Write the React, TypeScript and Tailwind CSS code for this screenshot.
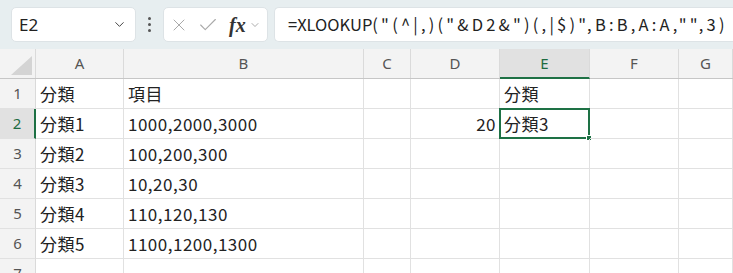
import { ChevronDown, X, Check } from "lucide-react";

const cols = [
  { key: "A", w: "w-[88px]" },
  { key: "B", w: "w-[240px]" },
  { key: "C", w: "w-[47px]" },
  { key: "D", w: "w-[89px]" },
  { key: "E", w: "w-[90px]" },
  { key: "F", w: "w-[89px]" },
  { key: "G", w: "flex-1" },
];

const data: Record<number, Record<string, string>> = {
  1: { A: "分類", B: "項目", E: "分類" },
  2: { A: "分類1", B: "1000,2000,3000", D: "20", E: "分類3" },
  3: { A: "分類2", B: "100,200,300" },
  4: { A: "分類3", B: "10,20,30" },
  5: { A: "分類4", B: "110,120,130" },
  6: { A: "分類5", B: "1100,1200,1300" },
  7: {},
};

const jp = "font-['Noto_Sans_CJK_JP','Noto_Sans',sans-serif]";

export default function App() {
  return (
    <div className="w-[733px] h-[273px] overflow-hidden bg-white">
      {/* formula bar */}
      <div className="h-[49px] bg-[#e7eef0] flex items-center pl-[11px] pr-0 gap-0">
        <div className="w-[125px] h-[35px] bg-white rounded-[5px] border border-[#dde3e6] flex items-center justify-between pl-[7px] pr-[8px]">
          <span className="text-[17px] text-[#222] font-['Noto_Sans',sans-serif]">E2</span>
          <ChevronDown size={15} strokeWidth={1.6} className="text-[#444]" />
        </div>
        <div className="w-[27px] flex flex-col items-center gap-[3px]">
          <span className="w-[3px] h-[3px] bg-[#555] rounded-full" />
          <span className="w-[3px] h-[3px] bg-[#555] rounded-full" />
          <span className="w-[3px] h-[3px] bg-[#555] rounded-full" />
        </div>
        <div className="w-[105px] h-[35px] bg-white rounded-[5px] border border-[#dde3e6] flex items-center pl-[5px]">
          <X size={20} strokeWidth={1.2} className="text-[#a9a9a9]" />
          <Check size={22} strokeWidth={1.2} className="text-[#a9a9a9] ml-[8px]" />
          <span className="ml-[10px] text-[20px] italic font-semibold text-[#333] font-['Liberation_Serif',serif] leading-none">fx</span>
          <ChevronDown size={12} strokeWidth={1.4} className="text-[#888] ml-[3px]" />
        </div>
        <div className="ml-[6px] flex-1 h-[35px] bg-white rounded-l-[5px] border border-r-0 border-[#dde3e6] flex items-center pl-[13px]">
          <span className={`text-[16.5px] text-[#222] whitespace-nowrap ${jp}`}>
            <span className="tracking-[0px]">=XLOOKUP</span>
            <span className="tracking-[3.2px]">("(^|,)("&D2&")(,|$)",B:B,A:A,"",3)</span>
          </span>
        </div>
      </div>

      {/* column headers */}
      <div className="flex h-[30px] bg-[#f3f3f3] border-b border-[#c6c6c6]">
        <div className="w-[36px] border-r border-[#dadada] relative">
          <div className="absolute right-[3px] bottom-[3px] w-0 h-0 border-l-[21px] border-l-transparent border-b-[19px] border-b-[#d4d4d4]" />
        </div>
        {cols.map((c) => (
          <div
            key={c.key}
            className={`${c.w} shrink-0 flex items-center justify-center text-[15px] font-['Noto_Sans',sans-serif] ${
              c.key === "E"
                ? "bg-[#e1e1e1] text-[#1e6b41] border-b-2 border-[#1e7145] -mb-px border-r border-r-[#dadada]"
                : "text-[#555] border-r border-[#dadada]"
            }`}
          >
            {c.key}
          </div>
        ))}
      </div>

      {/* rows */}
      {[1, 2, 3, 4, 5, 6, 7].map((r) => (
        <div key={r} className="flex h-[30px]">
          <div
            className={`w-[36px] shrink-0 flex items-center justify-center text-[15px] font-['Noto_Sans',sans-serif] border-b border-[#e1e1e1] ${
              r === 2
                ? "bg-[#e1e1e1] text-[#1e6b41] border-r-2 border-r-[#1e7145]"
                : "bg-[#f3f3f3] text-[#555] border-r border-r-[#dadada]"
            }`}
          >
            {r}
          </div>
          {cols.map((c) => {
            const v = data[r][c.key] ?? "";
            const num = /^\d+$/.test(v);
            const sel = r === 2 && c.key === "E";
            return (
              <div
                key={c.key}
                className={`${c.w} shrink-0 relative border-r border-b border-[#e1e1e1] flex items-center px-[4px] text-[17px] tracking-[0.5px] text-[#222] whitespace-nowrap ${jp} ${
                  num ? "justify-end pr-[3px]" : ""
                }`}
              >
                {v}
                {sel && (
                  <div className="absolute -left-px -top-px -right-px -bottom-px border-2 border-[#1e7145] pointer-events-none">
                    <div className="absolute -right-[4px] -bottom-[4px] w-[6px] h-[6px] bg-[#1e7145] border border-white" />
                  </div>
                )}
              </div>
            );
          })}
        </div>
      ))}
    </div>
  );
}
